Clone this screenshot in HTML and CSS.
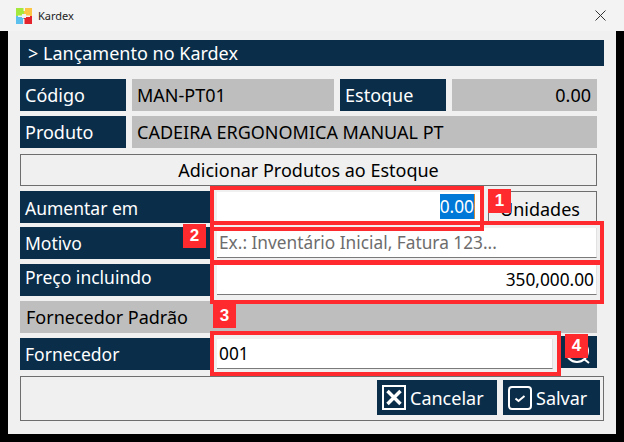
FILE: index.html
```html
<!DOCTYPE html>
<html lang="en">
<head>
    <meta charset="UTF-8">
    <title>Kardex</title>
    <link rel="stylesheet" href="styles.css">
</head>
<body>

<header class="titlebar">
    <svg class="app-icon" width="16" height="16" viewBox="0 0 16 16">
        <rect x="0" y="0" width="8" height="8" fill="#a4e83c"/>
        <rect x="8" y="0" width="8" height="8" fill="#fcc644"/>
        <rect x="0" y="8" width="8" height="8" fill="#5cc0ee"/>
        <rect x="8" y="8" width="8" height="8" fill="#e4242c"/>
        <path d="M7.5 0h1.5v3H7.5zM2 7.5h4v1.500H2zM10 7.500h4v1.500h-4zM7 11h1.500v5H7zM6 6h4v4H6z" fill="#f3f3f3"/>
    </svg>
    <span class="app-title">Kardex</span>
    <svg class="close-icon" width="11" height="11" viewBox="0 0 11 11">
        <path d="M0.5 0.5l10 10M10.5 0.5l-10 10" stroke="#333" stroke-width="1" fill="none"/>
    </svg>
</header>

<div class="dialog">
    <div class="heading">&gt; Lançamento no Kardex</div>

    <div class="row row-first">
        <div class="label">Código</div>
        <div class="readonly code">MAN-PT01</div>
        <div class="label">Estoque</div>
        <div class="readonly stock">0.00</div>
    </div>
    <div class="row">
        <div class="label">Produto</div>
        <div class="readonly grow">CADEIRA ERGONOMICA MANUAL PT</div>
    </div>

    <button class="section-btn">Adicionar Produtos ao Estoque</button>

    <div class="row">
        <div class="label wide text-down">Aumentar em</div>
        <div class="field amount right"><span class="selected">0.00</span></div>
        <div class="unit">Unidades</div>
    </div>
    <div class="row row-tight">
        <div class="label wide">Motivo</div>
        <div class="field placeholder">Ex.: Inventário Inicial, Fatura 123...</div>
    </div>
    <div class="row">
        <div class="label wide text-up">Preço incluindo</div>
        <div class="field right">350,000.00</div>
    </div>
    <div class="row">
        <div class="readonly grow">Fornecedor Padrão</div>
    </div>
    <div class="row">
        <div class="label wide">Fornecedor</div>
        <div class="field">001</div>
        <button class="lookup">
            <svg width="36" height="32" viewBox="0 0 36 32">
                <circle cx="16" cy="15" r="11" fill="none" stroke="#fff" stroke-width="2"/>
                <path d="M23 23l5 4" stroke="#fff" stroke-width="2"/>
            </svg>
        </button>
    </div>

    <div class="actions">
        <button class="action cancel">
            <svg width="24" height="25" viewBox="0 0 24 25">
                <rect x="1" y="1" width="22" height="23" fill="none" stroke="#fff" stroke-width="2"/>
                <path d="M5.500 6l13 13M18.500 6l-13 13" stroke="#fff" stroke-width="3.500"/>
            </svg>
            Cancelar
        </button>
        <button class="action save">
            <svg width="24" height="24" viewBox="0 0 24 24">
                <rect x="1" y="1" width="22" height="22" rx="3" fill="none" stroke="#fff" stroke-width="2"/>
                <path d="M7.500 12.500l3 2.500 6-5" fill="none" stroke="#fff" stroke-width="2"/>
            </svg>
            Salvar
        </button>
    </div>

    <div class="mark mark-1"></div>
    <div class="mark mark-2"></div>
    <div class="mark mark-3"></div>
    <div class="mark mark-4"></div>
    <div class="badge badge-1">1</div>
    <div class="badge badge-2">2</div>
    <div class="badge badge-3">3</div>
    <div class="badge badge-4">4</div>
</div>

</body>
</html>
```

FILE: styles.css
```css
body {
    margin: 0;
    background-color: #000;
    font-family: 'Noto Sans', sans-serif;
    overflow: hidden;
}

button {
    font-family: inherit;
    cursor: pointer;
}

.titlebar {
    height: 31px;
    background: #f3f3f3;
    display: flex;
    align-items: center;
    padding: 0 18px 0 16px;
}

.app-title {
    margin-left: 6px;
    font-size: 11px;
    color: #222;
}

.close-icon {
    margin-left: auto;
}

.dialog {
    position: relative;
    box-sizing: border-box;
    width: 608px;
    height: 403px;
    margin: 0 8px;
    padding: 9px 12px 0;
    background: #f0f0f0;
}

.heading {
    height: 26px;
    line-height: 26px;
    padding-left: 8px;
    background: #0a2e4a;
    color: #fff;
    font-size: 18px;
}

.row {
    display: flex;
    width: 577px;
    height: 32px;
    margin-top: 5px;
    font-size: 18px;
    line-height: 32px;
}

.row-first {
    margin-top: 13px;
}

.row-tight {
    margin-top: 4px;
}

.label {
    flex: none;
    box-sizing: border-box;
    width: 106px;
    padding-left: 5px;
    background: #0a2e4a;
    color: #fff;
}

.label.wide {
    width: 193px;
    margin-right: 4px;
    font-size: 17.5px;
}

.text-up {
    line-height: 26px;
}

.text-down {
    line-height: 34px;
}

.readonly {
    box-sizing: border-box;
    padding: 0 6px;
    background: #bebebe;
    color: #000;
}

.code {
    width: 202px;
    margin: 0 6px;
    padding-left: 5px;
}

.stock {
    width: 145px;
    margin-left: 6px;
    text-align: right;
}

.grow {
    flex: 1;
}

.row .label + .grow {
    margin-left: 6px;
    padding-left: 5px;
}

.section-btn {
    display: block;
    box-sizing: border-box;
    width: 577px;
    height: 32px;
    margin-top: 6px;
    padding: 0;
    background: #f0f0f0;
    border: 1px solid #6e6e6e;
    color: #000;
    font-size: 18px;
}

.field {
    flex: 1;
    box-sizing: border-box;
    height: 30px;
    line-height: 30px;
    margin-top: 1px;
    padding: 0 2px;
    background: #fff;
    border-bottom: 1px solid #7a7a7a;
    border-right: 1px solid #e2e2e2;
    color: #000;
    font-size: 17.3px;
}

.right {
    text-align: right;
}

.amount {
    flex: none;
    width: 264px;
    padding-right: 5px;
}

.selected {
    display: inline-block;
    height: 25px;
    line-height: 25px;
    background: #0078d7;
    border-right: 1px solid #d08a3c;
    color: #fff;
}

.placeholder {
    color: #6d6d6d;
}

.unit {
    box-sizing: border-box;
    width: 109px;
    margin-left: 7px;
    padding-left: 11px;
    border: 1px solid #6e6e6e;
    border-bottom: none;
    line-height: 34px;
    color: #000;
}

.lookup {
    flex: none;
    width: 36px;
    height: 32px;
    margin: -2px 0 0 8px;
    padding: 0;
    border: none;
    background: #0a2e4a;
}

.actions {
    display: flex;
    justify-content: flex-end;
    gap: 6px;
    box-sizing: border-box;
    width: 584px;
    height: 45px;
    margin-top: 6px;
    padding: 3px 3px 0 0;
    border: 1px solid #6e6e6e;
}

.action {
    display: flex;
    align-items: center;
    gap: 4px;
    height: 35px;
    padding: 0 0 0 5px;
    border: none;
    background: #0a2e4a;
    color: #fff;
    font-size: 18px;
}

.cancel {
    width: 120px;
}

.save {
    width: 97px;
}

.mark {
    position: absolute;
    box-sizing: border-box;
    left: 202px;
    border: 4px solid #ff2a2d;
}

.mark-1 { top: 155px; width: 274px; height: 45px; }
.mark-2 { top: 190px; width: 394px; height: 44px; }
.mark-3 { top: 229px; width: 394px; height: 44px; }
.mark-4 { top: 300px; width: 351px; height: 45px; }

.badge {
    position: absolute;
    width: 23px;
    height: 24px;
    line-height: 24px;
    background: #ff2a2d;
    color: #fff;
    font-family: 'Liberation Sans', sans-serif;
    font-size: 17px;
    font-weight: bold;
    text-align: center;
}

.badge-1 { left: 480px; top: 158px; }
.badge-2 { left: 175px; top: 193px; }
.badge-3 { left: 205px; top: 273px; }
.badge-4 { left: 557px; top: 303px; }
```
